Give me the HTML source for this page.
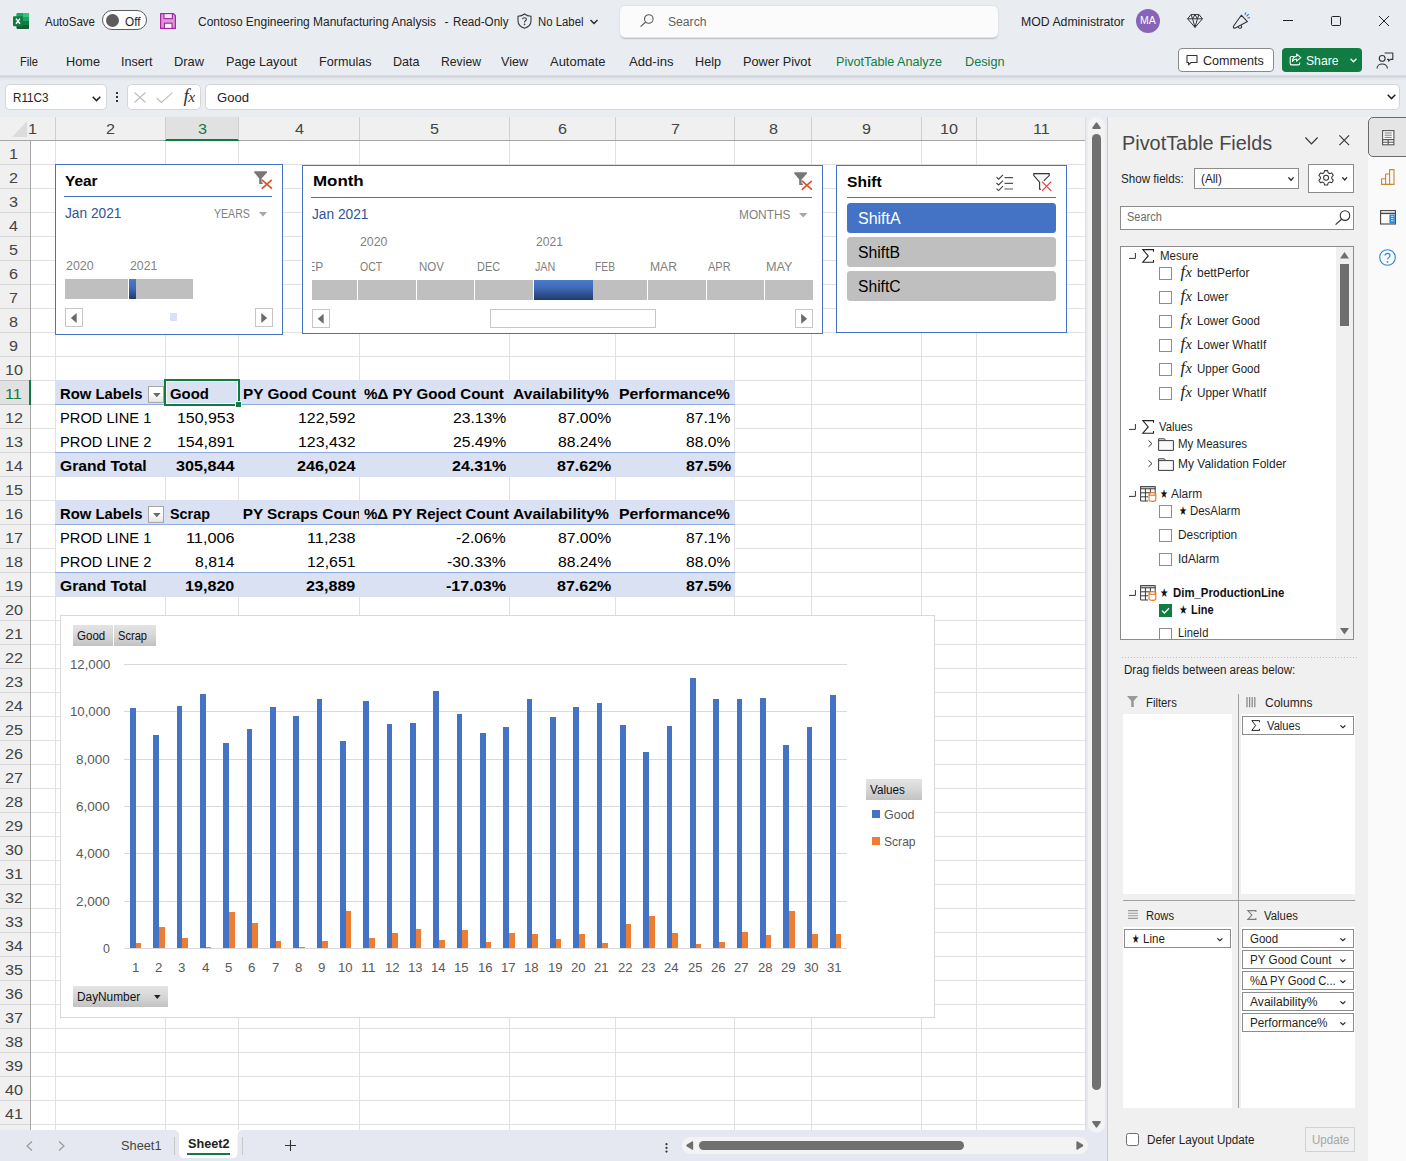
<!DOCTYPE html>
<html lang="en">
<head>
<meta charset="utf-8">
<title>Contoso Engineering Manufacturing Analysis - Excel</title>
<style>
*{box-sizing:border-box;margin:0;padding:0}
html,body{width:1406px;height:1161px;overflow:hidden;background:#fff}
body{position:relative;font-family:"Liberation Sans",Arial,sans-serif;}
.grp{position:absolute;left:0;top:0;width:0;height:0}
.grp div,.grp svg,.grp span.t,.grp b.t,.grp i.t,.grp label.t,.grp button.t{position:absolute}
.t{white-space:pre;line-height:1;transform-origin:0 0;display:block;font-weight:400;font-style:normal;background:none;border:0}
svg{overflow:visible;display:block}
</style>
</head>
<body>
<header class="grp titlebar" aria-label="titlebar">
<div style="left:0px;top:0px;width:1406px;height:76px;background:#e9edf2;"></div>
<svg style="left:13px;top:13px;" width="16" height="16" viewBox="0 0 16 16"><rect x="3.6" y="0" width="12.4" height="16" rx="1.3" fill="#21a366"/><rect x="9.8" y="0" width="6.2" height="4" fill="#33c481"/><path d="M4.9 0 H9.8 V4 H3.6 V1.3 C3.6 0.5 4.1 0 4.9 0 Z" fill="#21a366"/><rect x="3.6" y="4" width="6.2" height="4" fill="#107c41"/><rect x="9.8" y="4" width="6.2" height="4" fill="#21a366"/><rect x="3.6" y="8" width="6.2" height="4" fill="#185c37"/><rect x="9.8" y="8" width="6.2" height="4" fill="#107c41"/><path d="M3.6 12 H16 V14.7 C16 15.5 15.5 16 14.7 16 H4.9 C4.1 16 3.6 15.5 3.6 14.7 Z" fill="#185c37"/><rect x="0" y="3.2" width="10" height="10" rx="1" fill="#107c41"/><path d="M3 5.6 L7 10.8 M7 5.6 L3 10.8" stroke="#fff" stroke-width="1.5" fill="none"/></svg>
<span class="t" style="top:16.00px;font-size:12px;color:#242424;left:45.00px;transform:scaleX(0.9607);">AutoSave</span>
<div style="left:101.5px;top:10px;width:45px;height:20px;background:#fdfdfd;border:1px solid #5c5c5c;border-radius:10px;"></div>
<div style="left:105.5px;top:13.5px;width:13px;height:13px;background:#5c5c5c;border-radius:6.5px;"></div>
<span class="t" style="top:16.00px;font-size:12px;color:#242424;left:124.50px;transform:scaleX(0.9812);">Off</span>
<svg style="left:160px;top:13px;" width="16" height="16" viewBox="0 0 16 16"><path d="M0.6 0.6 H13.4 L15.4 2.6 V15.4 H0.6 Z" fill="#d99ad8" stroke="#a4269f" stroke-width="1.2" stroke-linejoin="round"/><rect x="4" y="0.6" width="8.4" height="5" fill="#f7e9f7" stroke="#a4269f" stroke-width="1.1"/><rect x="4.4" y="10.2" width="7.6" height="5.2" fill="#fdf6fd" stroke="#a4269f" stroke-width="1.1"/></svg>
<span class="t" style="top:16.00px;font-size:12px;color:#242424;left:197.50px;transform:scaleX(0.9966);">Contoso Engineering Manufacturing Analysis</span>
<span class="t" style="top:16.00px;font-size:12px;color:#242424;left:444.50px;">-</span>
<span class="t" style="top:16.00px;font-size:12px;color:#242424;left:453.00px;transform:scaleX(0.9676);">Read-Only</span>
<svg style="left:517px;top:13px;" width="15" height="16" viewBox="0 0 15 16"><path d="M7.5 1 C9.5 2.6 11.8 3.2 14 3.3 V8 C14 11.5 11.2 14 7.5 15.3 C3.8 14 1 11.5 1 8 V3.3 C3.2 3.2 5.5 2.6 7.5 1 Z" fill="none" stroke="#3b3b3b" stroke-width="1.1"/><path d="M5.6 6.2 C5.6 4.2 9.4 4.2 9.4 6.3 C9.4 7.8 7.5 7.8 7.5 9.4" fill="none" stroke="#3b3b3b" stroke-width="1.1"/><circle cx="7.5" cy="11.4" r="0.8" fill="#3b3b3b"/></svg>
<span class="t" style="top:16.00px;font-size:12px;color:#242424;left:537.50px;transform:scaleX(0.9470);">No Label</span>
<svg style="left:589.5px;top:18.8px;" width="8" height="6" viewBox="0 0 8 6"><path d="M0.5 1 L4 4.5 L7.5 1" fill="none" stroke="#242424" stroke-width="1.4"/></svg>
<div style="left:619.5px;top:6px;width:378.5px;height:31px;background:#fbfbfb;border-radius:5px;box-shadow:0 0 0 1px #dfe2e7, 0 1.5px 1.5px #b9bcc2;"></div>
<svg style="left:639.5px;top:14px;" width="14" height="13" viewBox="0 0 14 13"><circle cx="8.8" cy="5" r="4.3" fill="none" stroke="#5a5a5a" stroke-width="1.1"/><path d="M5.7 8 L0.6 12.6" stroke="#5a5a5a" stroke-width="1.2"/></svg>
<span class="t" style="top:16.00px;font-size:12px;color:#616161;left:668.00px;transform:scaleX(1.0123);">Search</span>
<span class="t" style="top:16.00px;font-size:12px;color:#242424;left:1021.30px;transform:scaleX(1.0231);">MOD Administrator</span>
<div style="left:1136px;top:9px;width:24px;height:24px;background:#8764b8;border-radius:12px;"></div>
<span class="t" style="top:15.00px;font-size:10.5px;color:#fff;left:1140.12px;">MA</span>
<svg style="left:1187px;top:13.5px;" width="16" height="14" viewBox="0 0 16 14"><path d="M4 0.6 H12 L15.4 4.8 L8 13.4 L0.6 4.8 Z M0.6 4.8 H15.4 M4 0.6 L5.6 4.8 L8 13.4 L10.4 4.8 L12 0.6 M8 0.6 L5.6 4.8 M8 0.6 L10.4 4.8" fill="none" stroke="#333" stroke-width="1" stroke-linejoin="round"/></svg>
<svg style="left:1232px;top:12px;" width="18" height="18" viewBox="0 0 18 18"><path d="M9.3 3.2 L15.4 9.6 L3.4 16 C2 16.6 0.8 15.4 1.6 14 Z" fill="none" stroke="#333" stroke-width="1.1" stroke-linejoin="round"/><path d="M6.2 14.8 C6.6 16.6 8.8 16.8 9.6 15.2 L9.4 13.2" fill="none" stroke="#333" stroke-width="1.1"/><path d="M13 2.6 L13.8 0.8 M14.8 4 L16.4 2.4 M15.8 6 L17.6 5.6" stroke="#2b7cd3" stroke-width="1.1" stroke-linecap="round"/></svg>
<svg style="left:1283px;top:20px;" width="10" height="1" viewBox="0 0 10 1"><rect width="10" height="1" fill="#222"/></svg>
<svg style="left:1331px;top:16px;" width="10" height="10" viewBox="0 0 10 10"><rect x="0.5" y="0.5" width="9" height="9" rx="1" fill="none" stroke="#222" stroke-width="1"/></svg>
<svg style="left:1379px;top:16px;" width="10" height="10" viewBox="0 0 10 10"><path d="M0 0 L10 10 M10 0 L0 10" stroke="#222" stroke-width="1"/></svg>
</header>
<nav class="grp ribbon" aria-label="ribbon">
<span class="t" style="top:55.00px;font-size:13px;color:#242424;left:19.50px;transform:scaleX(0.8591);">File</span>
<span class="t" style="top:55.00px;font-size:13px;color:#242424;left:65.50px;transform:scaleX(0.9802);">Home</span>
<span class="t" style="top:55.00px;font-size:13px;color:#242424;left:121.00px;transform:scaleX(0.9688);">Insert</span>
<span class="t" style="top:55.00px;font-size:13px;color:#242424;left:174.00px;transform:scaleX(0.9887);">Draw</span>
<span class="t" style="top:55.00px;font-size:13px;color:#242424;left:226.00px;transform:scaleX(0.9724);">Page Layout</span>
<span class="t" style="top:55.00px;font-size:13px;color:#242424;left:319.00px;transform:scaleX(0.9689);">Formulas</span>
<span class="t" style="top:55.00px;font-size:13px;color:#242424;left:393.00px;transform:scaleX(0.9647);">Data</span>
<span class="t" style="top:55.00px;font-size:13px;color:#242424;left:441.00px;transform:scaleX(0.9384);">Review</span>
<span class="t" style="top:55.00px;font-size:13px;color:#242424;left:500.80px;transform:scaleX(0.9659);">View</span>
<span class="t" style="top:55.00px;font-size:13px;color:#242424;left:549.50px;transform:scaleX(0.9972);">Automate</span>
<span class="t" style="top:55.00px;font-size:13px;color:#242424;left:628.50px;transform:scaleX(1.0096);">Add-ins</span>
<span class="t" style="top:55.00px;font-size:13px;color:#242424;left:694.50px;transform:scaleX(0.9720);">Help</span>
<span class="t" style="top:55.00px;font-size:13px;color:#242424;left:743.00px;transform:scaleX(0.9802);">Power Pivot</span>
<span class="t" style="top:55.00px;font-size:13px;color:#107c41;left:836.00px;transform:scaleX(0.9714);">PivotTable Analyze</span>
<span class="t" style="top:55.00px;font-size:13px;color:#107c41;left:965.00px;transform:scaleX(0.9761);">Design</span>
<div style="left:1178px;top:48px;width:95.5px;height:24px;background:#fff;border:1px solid #8a8a8a;border-radius:4px;"></div>
<svg style="left:1186px;top:54px;" width="12" height="12" viewBox="0 0 12 12"><path d="M1 1.5 H11 V8.5 H5 L2.6 10.8 V8.5 H1 Z" fill="none" stroke="#333" stroke-width="1.1" stroke-linejoin="round"/></svg>
<span class="t" style="top:54.00px;font-size:13px;color:#242424;left:1202.70px;transform:scaleX(0.9672);">Comments</span>
<div style="left:1282px;top:48px;width:80px;height:24px;background:#107c41;border-radius:4px;"></div>
<svg style="left:1289px;top:53px;" width="13" height="13" viewBox="0 0 13 13"><path d="M5 3.5 H2.5 C1.7 3.5 1.2 4 1.2 4.8 V10.6 C1.2 11.4 1.7 11.9 2.5 11.9 H9.4 C10.2 11.9 10.7 11.4 10.7 10.6 V9.4" fill="none" stroke="#fff" stroke-width="1.1"/><path d="M7.6 1 L11.8 4.6 L7.6 8.2 V6 C5.4 6 4.2 6.8 3.4 8.4 C3.6 5.4 5 3.4 7.6 3.2 Z" fill="none" stroke="#fff" stroke-width="1.1" stroke-linejoin="round"/></svg>
<span class="t" style="top:54.00px;font-size:13px;color:#fff;left:1306.00px;transform:scaleX(0.9365);">Share</span>
<svg style="left:1350px;top:58px;" width="7" height="5" viewBox="0 0 7 5"><path d="M0.5 0.8 L3.5 3.8 L6.5 0.8" fill="none" stroke="#fff" stroke-width="1.3"/></svg>
<svg style="left:1376px;top:52px;" width="18" height="17" viewBox="0 0 18 17"><circle cx="6.2" cy="6.4" r="2.9" fill="none" stroke="#333" stroke-width="1.1"/><path d="M1 16.5 C1 10.4 11.4 10.4 11.4 16.5" fill="none" stroke="#333" stroke-width="1.1"/><path d="M8.6 1 H16.8 V7.4 H14.4 L12.6 9.2 V7.4 H11" fill="none" stroke="#333" stroke-width="1.1" stroke-linejoin="round"/></svg>
</nav>
<section class="grp formulabar" aria-label="formulabar">
<div style="left:0px;top:75px;width:1406px;height:42px;background:linear-gradient(#e4e7ec 0,#cbcfd5 1px,#d6d9df 2px,#e2e5ea 3.5px,#e9edf2 6px);"></div>
<div style="left:5px;top:84px;width:102px;height:26px;background:#fff;border:1px solid #d3d5d9;border-radius:4.5px;"></div>
<span class="t" style="top:91.00px;font-size:13px;color:#242424;left:12.50px;transform:scaleX(0.8984);">R11C3</span>
<svg style="left:92px;top:95.5px;" width="9" height="6" viewBox="0 0 9 6"><path d="M0.7 0.8 L4.5 4.6 L8.3 0.8" fill="none" stroke="#222" stroke-width="1.5"/></svg>
<svg style="left:116px;top:92px;shape-rendering:crispEdges;" width="2" height="10" viewBox="0 0 2 10"><rect x="0" y="0" width="2" height="2" fill="#333"/><rect x="0" y="4" width="2" height="2" fill="#333"/><rect x="0" y="8" width="2" height="2" fill="#333"/></svg>
<div style="left:127px;top:84px;width:74px;height:26px;background:#fff;border:1px solid #d3d5d9;border-radius:4.5px;"></div>
<svg style="left:134px;top:91.5px;" width="12" height="11" viewBox="0 0 12 11"><path d="M0.5 0.5 L11.5 10.5 M11.5 0.5 L0.5 10.5" stroke="#bdbdbd" stroke-width="1.1"/></svg>
<svg style="left:155.5px;top:91.5px;" width="17" height="11" viewBox="0 0 17 11"><path d="M0.6 6 L5.4 10.4 L16.4 0.6" fill="none" stroke="#bdbdbd" stroke-width="1.1"/></svg>
<span class="t" style="top:86.00px;font-size:19px;color:#333;font-family:'Liberation Serif', 'Times New Roman', serif;font-style:italic;left:183.40px;">f</span>
<span class="t" style="top:89.00px;font-size:15.5px;color:#333;font-family:'Liberation Serif', 'Times New Roman', serif;font-style:italic;left:188.20px;">x</span>
<div style="left:205px;top:84px;width:1195px;height:26px;background:#fff;border:1px solid #d3d5d9;border-radius:4.5px;"></div>
<span class="t" style="top:91.00px;font-size:13px;color:#242424;left:217.00px;transform:scaleX(1.0059);">Good</span>
<svg style="left:1387px;top:93.5px;" width="9" height="6" viewBox="0 0 9 6"><path d="M0.7 0.8 L4.5 4.6 L8.3 0.8" fill="none" stroke="#222" stroke-width="1.5"/></svg>
</section>
<main class="grp grid" aria-label="grid">
<div style="left:0px;top:117px;width:1107px;height:1013px;background:#fff;"></div>
<div style="left:0px;top:117px;width:1085px;height:23px;background:#f0f0f0;"></div>
<div style="left:0px;top:140px;width:1085px;height:1px;background:#a6a6a6;"></div>
<div style="left:0px;top:141px;width:30px;height:989px;background:#f0f0f0;"></div>
<div style="left:30px;top:141px;width:1px;height:989px;background:#a6a6a6;"></div>
<svg style="left:12px;top:121px;" width="15" height="16" viewBox="0 0 15 16"><path d="M15 0 V16 H0 Z" fill="#dcdcdc"/></svg>
<div style="left:166px;top:117px;width:72px;height:22px;background:#e1e1e1;"></div>
<div style="left:165px;top:139px;width:74px;height:2px;background:#107c41;"></div>
<div style="left:0px;top:381px;width:29px;height:23px;background:#e1e1e1;"></div>
<div style="left:55px;top:117px;width:1px;height:23px;background:#cfcfcf;"></div>
<div style="left:55px;top:141px;width:1px;height:989px;background:#e1e1e1;"></div>
<div style="left:165px;top:117px;width:1px;height:23px;background:#cfcfcf;"></div>
<div style="left:165px;top:141px;width:1px;height:989px;background:#e1e1e1;"></div>
<div style="left:238px;top:117px;width:1px;height:23px;background:#cfcfcf;"></div>
<div style="left:238px;top:141px;width:1px;height:989px;background:#e1e1e1;"></div>
<div style="left:359px;top:117px;width:1px;height:23px;background:#cfcfcf;"></div>
<div style="left:359px;top:141px;width:1px;height:989px;background:#e1e1e1;"></div>
<div style="left:509px;top:117px;width:1px;height:23px;background:#cfcfcf;"></div>
<div style="left:509px;top:141px;width:1px;height:989px;background:#e1e1e1;"></div>
<div style="left:615px;top:117px;width:1px;height:23px;background:#cfcfcf;"></div>
<div style="left:615px;top:141px;width:1px;height:989px;background:#e1e1e1;"></div>
<div style="left:734px;top:117px;width:1px;height:23px;background:#cfcfcf;"></div>
<div style="left:734px;top:141px;width:1px;height:989px;background:#e1e1e1;"></div>
<div style="left:811px;top:117px;width:1px;height:23px;background:#cfcfcf;"></div>
<div style="left:811px;top:141px;width:1px;height:989px;background:#e1e1e1;"></div>
<div style="left:921px;top:117px;width:1px;height:23px;background:#cfcfcf;"></div>
<div style="left:921px;top:141px;width:1px;height:989px;background:#e1e1e1;"></div>
<div style="left:976px;top:117px;width:1px;height:23px;background:#cfcfcf;"></div>
<div style="left:976px;top:141px;width:1px;height:989px;background:#e1e1e1;"></div>
<div style="left:0px;top:164px;width:30px;height:1px;background:#d6d6d6;"></div>
<div style="left:31px;top:164px;width:1054px;height:1px;background:#e1e1e1;"></div>
<div style="left:0px;top:188px;width:30px;height:1px;background:#d6d6d6;"></div>
<div style="left:31px;top:188px;width:1054px;height:1px;background:#e1e1e1;"></div>
<div style="left:0px;top:212px;width:30px;height:1px;background:#d6d6d6;"></div>
<div style="left:31px;top:212px;width:1054px;height:1px;background:#e1e1e1;"></div>
<div style="left:0px;top:236px;width:30px;height:1px;background:#d6d6d6;"></div>
<div style="left:31px;top:236px;width:1054px;height:1px;background:#e1e1e1;"></div>
<div style="left:0px;top:260px;width:30px;height:1px;background:#d6d6d6;"></div>
<div style="left:31px;top:260px;width:1054px;height:1px;background:#e1e1e1;"></div>
<div style="left:0px;top:284px;width:30px;height:1px;background:#d6d6d6;"></div>
<div style="left:31px;top:284px;width:1054px;height:1px;background:#e1e1e1;"></div>
<div style="left:0px;top:308px;width:30px;height:1px;background:#d6d6d6;"></div>
<div style="left:31px;top:308px;width:1054px;height:1px;background:#e1e1e1;"></div>
<div style="left:0px;top:332px;width:30px;height:1px;background:#d6d6d6;"></div>
<div style="left:31px;top:332px;width:1054px;height:1px;background:#e1e1e1;"></div>
<div style="left:0px;top:356px;width:30px;height:1px;background:#d6d6d6;"></div>
<div style="left:31px;top:356px;width:1054px;height:1px;background:#e1e1e1;"></div>
<div style="left:0px;top:380px;width:30px;height:1px;background:#c4c4c4;"></div>
<div style="left:31px;top:380px;width:1054px;height:1px;background:#e1e1e1;"></div>
<div style="left:0px;top:404px;width:30px;height:1px;background:#c4c4c4;"></div>
<div style="left:31px;top:404px;width:1054px;height:1px;background:#e1e1e1;"></div>
<div style="left:0px;top:428px;width:30px;height:1px;background:#d6d6d6;"></div>
<div style="left:31px;top:428px;width:1054px;height:1px;background:#e1e1e1;"></div>
<div style="left:0px;top:452px;width:30px;height:1px;background:#d6d6d6;"></div>
<div style="left:31px;top:452px;width:1054px;height:1px;background:#e1e1e1;"></div>
<div style="left:0px;top:476px;width:30px;height:1px;background:#d6d6d6;"></div>
<div style="left:31px;top:476px;width:1054px;height:1px;background:#e1e1e1;"></div>
<div style="left:0px;top:500px;width:30px;height:1px;background:#d6d6d6;"></div>
<div style="left:31px;top:500px;width:1054px;height:1px;background:#e1e1e1;"></div>
<div style="left:0px;top:524px;width:30px;height:1px;background:#d6d6d6;"></div>
<div style="left:31px;top:524px;width:1054px;height:1px;background:#e1e1e1;"></div>
<div style="left:0px;top:548px;width:30px;height:1px;background:#d6d6d6;"></div>
<div style="left:31px;top:548px;width:1054px;height:1px;background:#e1e1e1;"></div>
<div style="left:0px;top:572px;width:30px;height:1px;background:#d6d6d6;"></div>
<div style="left:31px;top:572px;width:1054px;height:1px;background:#e1e1e1;"></div>
<div style="left:0px;top:596px;width:30px;height:1px;background:#d6d6d6;"></div>
<div style="left:31px;top:596px;width:1054px;height:1px;background:#e1e1e1;"></div>
<div style="left:0px;top:620px;width:30px;height:1px;background:#d6d6d6;"></div>
<div style="left:31px;top:620px;width:1054px;height:1px;background:#e1e1e1;"></div>
<div style="left:0px;top:644px;width:30px;height:1px;background:#d6d6d6;"></div>
<div style="left:31px;top:644px;width:1054px;height:1px;background:#e1e1e1;"></div>
<div style="left:0px;top:668px;width:30px;height:1px;background:#d6d6d6;"></div>
<div style="left:31px;top:668px;width:1054px;height:1px;background:#e1e1e1;"></div>
<div style="left:0px;top:692px;width:30px;height:1px;background:#d6d6d6;"></div>
<div style="left:31px;top:692px;width:1054px;height:1px;background:#e1e1e1;"></div>
<div style="left:0px;top:716px;width:30px;height:1px;background:#d6d6d6;"></div>
<div style="left:31px;top:716px;width:1054px;height:1px;background:#e1e1e1;"></div>
<div style="left:0px;top:740px;width:30px;height:1px;background:#d6d6d6;"></div>
<div style="left:31px;top:740px;width:1054px;height:1px;background:#e1e1e1;"></div>
<div style="left:0px;top:764px;width:30px;height:1px;background:#d6d6d6;"></div>
<div style="left:31px;top:764px;width:1054px;height:1px;background:#e1e1e1;"></div>
<div style="left:0px;top:788px;width:30px;height:1px;background:#d6d6d6;"></div>
<div style="left:31px;top:788px;width:1054px;height:1px;background:#e1e1e1;"></div>
<div style="left:0px;top:812px;width:30px;height:1px;background:#d6d6d6;"></div>
<div style="left:31px;top:812px;width:1054px;height:1px;background:#e1e1e1;"></div>
<div style="left:0px;top:836px;width:30px;height:1px;background:#d6d6d6;"></div>
<div style="left:31px;top:836px;width:1054px;height:1px;background:#e1e1e1;"></div>
<div style="left:0px;top:860px;width:30px;height:1px;background:#d6d6d6;"></div>
<div style="left:31px;top:860px;width:1054px;height:1px;background:#e1e1e1;"></div>
<div style="left:0px;top:884px;width:30px;height:1px;background:#d6d6d6;"></div>
<div style="left:31px;top:884px;width:1054px;height:1px;background:#e1e1e1;"></div>
<div style="left:0px;top:908px;width:30px;height:1px;background:#d6d6d6;"></div>
<div style="left:31px;top:908px;width:1054px;height:1px;background:#e1e1e1;"></div>
<div style="left:0px;top:932px;width:30px;height:1px;background:#d6d6d6;"></div>
<div style="left:31px;top:932px;width:1054px;height:1px;background:#e1e1e1;"></div>
<div style="left:0px;top:956px;width:30px;height:1px;background:#d6d6d6;"></div>
<div style="left:31px;top:956px;width:1054px;height:1px;background:#e1e1e1;"></div>
<div style="left:0px;top:980px;width:30px;height:1px;background:#d6d6d6;"></div>
<div style="left:31px;top:980px;width:1054px;height:1px;background:#e1e1e1;"></div>
<div style="left:0px;top:1004px;width:30px;height:1px;background:#d6d6d6;"></div>
<div style="left:31px;top:1004px;width:1054px;height:1px;background:#e1e1e1;"></div>
<div style="left:0px;top:1028px;width:30px;height:1px;background:#d6d6d6;"></div>
<div style="left:31px;top:1028px;width:1054px;height:1px;background:#e1e1e1;"></div>
<div style="left:0px;top:1052px;width:30px;height:1px;background:#d6d6d6;"></div>
<div style="left:31px;top:1052px;width:1054px;height:1px;background:#e1e1e1;"></div>
<div style="left:0px;top:1076px;width:30px;height:1px;background:#d6d6d6;"></div>
<div style="left:31px;top:1076px;width:1054px;height:1px;background:#e1e1e1;"></div>
<div style="left:0px;top:1100px;width:30px;height:1px;background:#d6d6d6;"></div>
<div style="left:31px;top:1100px;width:1054px;height:1px;background:#e1e1e1;"></div>
<div style="left:0px;top:1124px;width:30px;height:1px;background:#d6d6d6;"></div>
<div style="left:31px;top:1124px;width:1054px;height:1px;background:#e1e1e1;"></div>
<div style="left:29px;top:380px;width:2px;height:25px;background:#107c41;"></div>
<span class="t" style="top:121.00px;font-size:15.4px;color:#444;left:27.70px;transform:scaleX(1.0500);">1</span>
<span class="t" style="top:121.00px;font-size:15.4px;color:#444;left:106.00px;transform:scaleX(1.0500);">2</span>
<span class="t" style="top:121.00px;font-size:15.4px;color:#107c41;left:197.50px;transform:scaleX(1.0500);">3</span>
<span class="t" style="top:121.00px;font-size:15.4px;color:#444;left:294.50px;transform:scaleX(1.0500);">4</span>
<span class="t" style="top:121.00px;font-size:15.4px;color:#444;left:430.00px;transform:scaleX(1.0500);">5</span>
<span class="t" style="top:121.00px;font-size:15.4px;color:#444;left:558.00px;transform:scaleX(1.0500);">6</span>
<span class="t" style="top:121.00px;font-size:15.4px;color:#444;left:670.50px;transform:scaleX(1.0500);">7</span>
<span class="t" style="top:121.00px;font-size:15.4px;color:#444;left:768.50px;transform:scaleX(1.0500);">8</span>
<span class="t" style="top:121.00px;font-size:15.4px;color:#444;left:862.00px;transform:scaleX(1.0500);">9</span>
<span class="t" style="top:121.00px;font-size:15.4px;color:#444;left:940.01px;transform:scaleX(1.0500);">10</span>
<span class="t" style="top:121.00px;font-size:15.4px;color:#444;left:1032.81px;transform:scaleX(1.0500);">11</span>
<span class="t" style="top:146.00px;font-size:15.4px;color:#444;left:9.30px;transform:scaleX(1.0500);">1</span>
<span class="t" style="top:170.00px;font-size:15.4px;color:#444;left:9.30px;transform:scaleX(1.0500);">2</span>
<span class="t" style="top:194.00px;font-size:15.4px;color:#444;left:9.30px;transform:scaleX(1.0500);">3</span>
<span class="t" style="top:218.00px;font-size:15.4px;color:#444;left:9.30px;transform:scaleX(1.0500);">4</span>
<span class="t" style="top:242.00px;font-size:15.4px;color:#444;left:9.30px;transform:scaleX(1.0500);">5</span>
<span class="t" style="top:266.00px;font-size:15.4px;color:#444;left:9.30px;transform:scaleX(1.0500);">6</span>
<span class="t" style="top:290.00px;font-size:15.4px;color:#444;left:9.30px;transform:scaleX(1.0500);">7</span>
<span class="t" style="top:314.00px;font-size:15.4px;color:#444;left:9.30px;transform:scaleX(1.0500);">8</span>
<span class="t" style="top:338.00px;font-size:15.4px;color:#444;left:9.30px;transform:scaleX(1.0500);">9</span>
<span class="t" style="top:362.00px;font-size:15.4px;color:#444;left:4.81px;transform:scaleX(1.0500);">10</span>
<span class="t" style="top:386.00px;font-size:15.4px;color:#107c41;left:5.41px;transform:scaleX(1.0500);">11</span>
<span class="t" style="top:410.00px;font-size:15.4px;color:#444;left:4.81px;transform:scaleX(1.0500);">12</span>
<span class="t" style="top:434.00px;font-size:15.4px;color:#444;left:4.81px;transform:scaleX(1.0500);">13</span>
<span class="t" style="top:458.00px;font-size:15.4px;color:#444;left:4.81px;transform:scaleX(1.0500);">14</span>
<span class="t" style="top:482.00px;font-size:15.4px;color:#444;left:4.81px;transform:scaleX(1.0500);">15</span>
<span class="t" style="top:506.00px;font-size:15.4px;color:#444;left:4.81px;transform:scaleX(1.0500);">16</span>
<span class="t" style="top:530.00px;font-size:15.4px;color:#444;left:4.81px;transform:scaleX(1.0500);">17</span>
<span class="t" style="top:554.00px;font-size:15.4px;color:#444;left:4.81px;transform:scaleX(1.0500);">18</span>
<span class="t" style="top:578.00px;font-size:15.4px;color:#444;left:4.81px;transform:scaleX(1.0500);">19</span>
<span class="t" style="top:602.00px;font-size:15.4px;color:#444;left:4.81px;transform:scaleX(1.0500);">20</span>
<span class="t" style="top:626.00px;font-size:15.4px;color:#444;left:4.81px;transform:scaleX(1.0500);">21</span>
<span class="t" style="top:650.00px;font-size:15.4px;color:#444;left:4.81px;transform:scaleX(1.0500);">22</span>
<span class="t" style="top:674.00px;font-size:15.4px;color:#444;left:4.81px;transform:scaleX(1.0500);">23</span>
<span class="t" style="top:698.00px;font-size:15.4px;color:#444;left:4.81px;transform:scaleX(1.0500);">24</span>
<span class="t" style="top:722.00px;font-size:15.4px;color:#444;left:4.81px;transform:scaleX(1.0500);">25</span>
<span class="t" style="top:746.00px;font-size:15.4px;color:#444;left:4.81px;transform:scaleX(1.0500);">26</span>
<span class="t" style="top:770.00px;font-size:15.4px;color:#444;left:4.81px;transform:scaleX(1.0500);">27</span>
<span class="t" style="top:794.00px;font-size:15.4px;color:#444;left:4.81px;transform:scaleX(1.0500);">28</span>
<span class="t" style="top:818.00px;font-size:15.4px;color:#444;left:4.81px;transform:scaleX(1.0500);">29</span>
<span class="t" style="top:842.00px;font-size:15.4px;color:#444;left:4.81px;transform:scaleX(1.0500);">30</span>
<span class="t" style="top:866.00px;font-size:15.4px;color:#444;left:4.81px;transform:scaleX(1.0500);">31</span>
<span class="t" style="top:890.00px;font-size:15.4px;color:#444;left:4.81px;transform:scaleX(1.0500);">32</span>
<span class="t" style="top:914.00px;font-size:15.4px;color:#444;left:4.81px;transform:scaleX(1.0500);">33</span>
<span class="t" style="top:938.00px;font-size:15.4px;color:#444;left:4.81px;transform:scaleX(1.0500);">34</span>
<span class="t" style="top:962.00px;font-size:15.4px;color:#444;left:4.81px;transform:scaleX(1.0500);">35</span>
<span class="t" style="top:986.00px;font-size:15.4px;color:#444;left:4.81px;transform:scaleX(1.0500);">36</span>
<span class="t" style="top:1010.00px;font-size:15.4px;color:#444;left:4.81px;transform:scaleX(1.0500);">37</span>
<span class="t" style="top:1034.00px;font-size:15.4px;color:#444;left:4.81px;transform:scaleX(1.0500);">38</span>
<span class="t" style="top:1058.00px;font-size:15.4px;color:#444;left:4.81px;transform:scaleX(1.0500);">39</span>
<span class="t" style="top:1082.00px;font-size:15.4px;color:#444;left:4.81px;transform:scaleX(1.0500);">40</span>
<span class="t" style="top:1106.00px;font-size:15.4px;color:#444;left:4.81px;transform:scaleX(1.0500);">41</span>
</main>
<section class="grp slicer-year" aria-label="slicer-year">
<div style="left:55px;top:164px;width:228px;height:171px;background:#fff;border:1px solid #4472c4;"></div>
<span class="t" style="top:174.00px;font-size:14.5px;color:#000;font-weight:700;left:65.40px;transform:scaleX(1.0634);">Year</span>
<svg style="left:254px;top:171px;" width="19" height="19" viewBox="0 0 19 19"><path d="M0.2 0.3 H13 V1.6 L7.6 7.4 V11.6 H8.8 V12.9 H5.2 V7.4 L0.2 1.6 Z" fill="#787878"/><path d="M8.2 9.2 L17.4 17.2 M17.2 9.4 L8.2 17.3" stroke="#d9532c" stroke-width="1.7" stroke-linecap="round"/></svg>
<div style="left:64px;top:196px;width:208px;height:1px;background:#4472c4;"></div>
<span class="t" style="top:206.00px;font-size:14px;color:#2f5597;left:65.00px;transform:scaleX(0.9790);">Jan 2021</span>
<span class="t" style="top:208.00px;font-size:12px;color:#7f7f7f;left:214.20px;transform:scaleX(0.8799);">YEARS</span>
<svg style="left:259.3px;top:212px;" width="8" height="4.5" viewBox="0 0 8 4.5"><path d="M0 0 H8 L4 4.5 Z" fill="#a6a6a6"/></svg>
<span class="t" style="top:260.00px;font-size:12px;color:#7f7f7f;left:66.40px;transform:scaleX(1.0336);">2020</span>
<span class="t" style="top:260.00px;font-size:12px;color:#7f7f7f;left:130.20px;transform:scaleX(1.0224);">2021</span>
<div style="left:65px;top:279px;width:128px;height:19.5px;background:#bfbfbf;"></div>
<div style="left:127.7px;top:279px;width:1.6px;height:19.5px;background:#fff;"></div>
<div style="left:129.3px;top:279px;width:6.7px;height:19.5px;background:linear-gradient(#4a7acc,#3f69b5 45%,#1f3a6e);"></div>
<div style="left:65px;top:308px;width:18px;height:18.6px;background:#fff;border:1px solid #c6c6c6;"><svg style="left:-1px;top:-1px" width="18" height="18.6"><path d="M11.7 4.9 L5.8 9.9 L11.7 14.9 Z" fill="#6b6b6b"/></svg></div>
<div style="left:255px;top:308px;width:18px;height:18.6px;background:#fff;border:1px solid #c6c6c6;"><svg style="left:-1px;top:-1px" width="18" height="18.6"><path d="M6.3 4.9 L12.2 9.9 L6.3 14.9 Z" fill="#6b6b6b"/></svg></div>
<div style="left:169.8px;top:313px;width:7.2px;height:7.8px;background:#d9e1f2;"></div>
</section>
<section class="grp slicer-month" aria-label="slicer-month">
<div style="left:302px;top:165px;width:521px;height:169px;background:#fff;border:1px solid #4472c4;"></div>
<span class="t" style="top:174.00px;font-size:14.5px;color:#000;font-weight:700;left:312.60px;transform:scaleX(1.1659);">Month</span>
<svg style="left:794px;top:172px;" width="19" height="19" viewBox="0 0 19 19"><path d="M0.2 0.3 H13 V1.6 L7.6 7.4 V11.6 H8.8 V12.9 H5.2 V7.4 L0.2 1.6 Z" fill="#787878"/><path d="M8.2 9.2 L17.4 17.2 M17.2 9.4 L8.2 17.3" stroke="#d9532c" stroke-width="1.7" stroke-linecap="round"/></svg>
<div style="left:311px;top:197.3px;width:501px;height:1px;background:#4472c4;"></div>
<span class="t" style="top:207.00px;font-size:14px;color:#2f5597;left:312.20px;transform:scaleX(0.9807);">Jan 2021</span>
<span class="t" style="top:209.00px;font-size:12px;color:#7f7f7f;left:738.60px;transform:scaleX(0.9885);">MONTHS</span>
<svg style="left:799px;top:213px;" width="8.4" height="4.5" viewBox="0 0 8.4 4.5"><path d="M0 0 H8.4 L4.2 4.5 Z" fill="#a6a6a6"/></svg>
<span class="t" style="top:236.00px;font-size:12px;color:#7f7f7f;left:359.50px;transform:scaleX(1.0298);">2020</span>
<span class="t" style="top:236.00px;font-size:12px;color:#7f7f7f;left:535.80px;transform:scaleX(1.0074);">2021</span>
<div style="left:311.8px;top:255px;width:20px;height:20px;overflow:hidden;"><span class="t" style="left:-12.6px;top:6px;font-size:12px;color:#7f7f7f">SEP</span></div>
<span class="t" style="top:261.00px;font-size:12px;color:#7f7f7f;left:359.50px;transform:scaleX(0.8760);">OCT</span>
<span class="t" style="top:261.00px;font-size:12px;color:#7f7f7f;left:418.60px;transform:scaleX(0.9610);">NOV</span>
<span class="t" style="top:261.00px;font-size:12px;color:#7f7f7f;left:476.60px;transform:scaleX(0.9115);">DEC</span>
<span class="t" style="top:261.00px;font-size:12px;color:#7f7f7f;left:535.00px;transform:scaleX(0.8954);">JAN</span>
<span class="t" style="top:261.00px;font-size:12px;color:#7f7f7f;left:595.30px;transform:scaleX(0.8568);">FEB</span>
<span class="t" style="top:261.00px;font-size:12px;color:#7f7f7f;left:649.50px;transform:scaleX(1.0086);">MAR</span>
<span class="t" style="top:261.00px;font-size:12px;color:#7f7f7f;left:707.90px;transform:scaleX(0.9154);">APR</span>
<span class="t" style="top:261.00px;font-size:12px;color:#7f7f7f;left:766.30px;transform:scaleX(1.0547);">MAY</span>
<div style="left:311.8px;top:280px;width:501.2px;height:19.8px;background:#bfbfbf;"></div>
<div style="left:356.8px;top:280px;width:1.3px;height:19.8px;background:#fff;"></div>
<div style="left:415.9px;top:280px;width:1.3px;height:19.8px;background:#fff;"></div>
<div style="left:473.7px;top:280px;width:1.3px;height:19.8px;background:#fff;"></div>
<div style="left:533px;top:280px;width:1.3px;height:19.8px;background:#fff;"></div>
<div style="left:646.8px;top:280px;width:1.3px;height:19.8px;background:#fff;"></div>
<div style="left:705.8px;top:280px;width:1.3px;height:19.8px;background:#fff;"></div>
<div style="left:764px;top:280px;width:1.3px;height:19.8px;background:#fff;"></div>
<div style="left:534.2px;top:280px;width:58.8px;height:19.8px;background:linear-gradient(#4a7acc,#4069b6 40%,#1f3a6e);"></div>
<div style="left:312.2px;top:309.4px;width:17.8px;height:18.2px;background:#fff;border:1px solid #c6c6c6;"><svg style="left:-1px;top:-1px" width="17.8" height="18.2"><path d="M11.600000000000001 4.699999999999999 L5.7 9.7 L11.600000000000001 14.7 Z" fill="#6b6b6b"/></svg></div>
<div style="left:795.2px;top:309.4px;width:17.8px;height:18.2px;background:#fff;border:1px solid #c6c6c6;"><svg style="left:-1px;top:-1px" width="17.8" height="18.2"><path d="M6.2 4.699999999999999 L12.100000000000001 9.7 L6.2 14.7 Z" fill="#6b6b6b"/></svg></div>
<div style="left:490px;top:309.2px;width:165.6px;height:18.4px;background:#fff;border:1px solid #c6c6c6;"></div>
</section>
<section class="grp slicer-shift" aria-label="slicer-shift">
<div style="left:836px;top:165px;width:231px;height:168px;background:#fff;border:1px solid #4472c4;"></div>
<span class="t" style="top:175.00px;font-size:14.5px;color:#000;font-weight:700;left:847.30px;transform:scaleX(1.0739);">Shift</span>
<svg style="left:995.5px;top:173.6px;" width="18" height="17" viewBox="0 0 18 17"><path d="M0.5 3.2 L2.6 5.2 L7 0.8 M0.5 9 L2.6 11 L7 6.6 M0.5 14.6 L2.6 16.6 L7 12.2" fill="none" stroke="#404040" stroke-width="1.1"/><path d="M8.5 3.6 H17 M8.5 9.4 H17 M8.5 15 H17" stroke="#555" stroke-width="1.2"/></svg>
<svg style="left:1032.5px;top:173px;" width="19" height="18" viewBox="0 0 19 18"><path d="M6.6 16.4 V9.2 L0.8 2.6 V0.6 H16.2 V2.6 L10.8 7.8" fill="#f7f7f7" stroke="#333" stroke-width="1.1" stroke-linejoin="miter"/><path d="M6.6 16.4 H7.8" stroke="#333" stroke-width="1.1"/><path d="M9 8.6 L18.2 17.9 M18.2 8.6 L9 17.9" stroke="#ee3b44" stroke-width="1.25"/></svg>
<div style="left:847px;top:196.8px;width:209px;height:1px;background:#4472c4;"></div>
<div style="left:847px;top:203.2px;width:209px;height:29.8px;background:#4472c4;border-radius:3.5px;"></div>
<span class="t" style="top:211.00px;font-size:16px;color:#fff;left:858.40px;transform:scaleX(0.9980);">ShiftA</span>
<div style="left:847px;top:237.2px;width:209px;height:29.6px;background:#bfbfbf;border-radius:3.5px;"></div>
<span class="t" style="top:245.00px;font-size:16px;color:#000;left:858.40px;transform:scaleX(0.9862);">ShiftB</span>
<div style="left:847px;top:271px;width:209px;height:29.8px;background:#bfbfbf;border-radius:3.5px;"></div>
<span class="t" style="top:279.00px;font-size:16px;color:#000;left:858.40px;transform:scaleX(0.9776);">ShiftC</span>
</section>
<section class="grp pivot-good" aria-label="pivot-good">
<div style="left:55px;top:380px;width:680px;height:24px;background:#d9e1f2;"></div>
<div style="left:55px;top:404px;width:680px;height:1px;background:#8ea9db;"></div>
<div style="left:56px;top:405px;width:678px;height:47px;background:#fff;"></div>
<div style="left:55px;top:453px;width:680px;height:24px;background:#d9e1f2;"></div>
<div style="left:55px;top:452px;width:680px;height:1px;background:#8ea9db;"></div>
<span class="t" style="top:386.00px;font-size:15.3px;color:#000;font-weight:700;left:59.70px;transform:scaleX(0.9706);">Row Labels</span>
<div style="left:148px;top:386px;width:16px;height:17px;background:linear-gradient(#fff 40%,#e4e4e4);border:1px solid #a6a6a6;"><svg style="left:3.6px;top:6px" width="8" height="5"><path d="M0 0 H7.6 L3.8 4.3 Z" fill="#6a6a6a"/></svg></div>
<span class="t" style="top:386.00px;font-size:15.3px;color:#000;font-weight:700;left:169.70px;transform:scaleX(0.9740);">Good</span>
<span class="t" style="top:386.00px;font-size:15.3px;color:#000;font-weight:700;left:242.70px;transform:scaleX(1.0024);">PY Good Count</span>
<span class="t" style="top:386.00px;font-size:15.3px;color:#000;font-weight:700;left:363.70px;transform:scaleX(0.9880);">%Δ PY Good Count</span>
<span class="t" style="top:386.00px;font-size:15.3px;color:#000;font-weight:700;left:513.00px;transform:scaleX(1.0223);">Availability%</span>
<span class="t" style="top:386.00px;font-size:15.3px;color:#000;font-weight:700;left:619.10px;transform:scaleX(1.0352);">Performance%</span>
<span class="t" style="top:410.00px;font-size:15.2px;color:#000;left:59.50px;transform:scaleX(0.9658);">PROD LINE 1</span>
<span class="t" style="top:410.00px;font-size:15.2px;color:#000;left:177.42px;transform:scaleX(1.0487);">150,953</span>
<span class="t" style="top:410.00px;font-size:15.2px;color:#000;left:298.42px;transform:scaleX(1.0487);">122,592</span>
<span class="t" style="top:410.00px;font-size:15.2px;color:#000;left:452.63px;transform:scaleX(1.0360);">23.13%</span>
<span class="t" style="top:410.00px;font-size:15.2px;color:#000;left:557.93px;transform:scaleX(1.0360);">87.00%</span>
<span class="t" style="top:410.00px;font-size:15.2px;color:#000;left:686.36px;transform:scaleX(1.0293);">87.1%</span>
<span class="t" style="top:434.00px;font-size:15.2px;color:#000;left:59.50px;transform:scaleX(0.9658);">PROD LINE 2</span>
<span class="t" style="top:434.00px;font-size:15.2px;color:#000;left:177.42px;transform:scaleX(1.0487);">154,891</span>
<span class="t" style="top:434.00px;font-size:15.2px;color:#000;left:298.42px;transform:scaleX(1.0487);">123,432</span>
<span class="t" style="top:434.00px;font-size:15.2px;color:#000;left:452.63px;transform:scaleX(1.0360);">25.49%</span>
<span class="t" style="top:434.00px;font-size:15.2px;color:#000;left:557.93px;transform:scaleX(1.0360);">88.24%</span>
<span class="t" style="top:434.00px;font-size:15.2px;color:#000;left:686.36px;transform:scaleX(1.0293);">88.0%</span>
<span class="t" style="top:458.00px;font-size:15.3px;color:#000;font-weight:700;left:59.50px;transform:scaleX(1.0236);">Grand Total</span>
<span class="t" style="top:458.00px;font-size:15.3px;color:#000;font-weight:700;left:176.18px;transform:scaleX(1.0583);">305,844</span>
<span class="t" style="top:458.00px;font-size:15.3px;color:#000;font-weight:700;left:297.18px;transform:scaleX(1.0583);">246,024</span>
<span class="t" style="top:458.00px;font-size:15.3px;color:#000;font-weight:700;left:452.02px;transform:scaleX(1.0480);">24.31%</span>
<span class="t" style="top:458.00px;font-size:15.3px;color:#000;font-weight:700;left:557.32px;transform:scaleX(1.0480);">87.62%</span>
<span class="t" style="top:458.00px;font-size:15.3px;color:#000;font-weight:700;left:685.89px;transform:scaleX(1.0423);">87.5%</span>
</section>
<section class="grp pivot-scrap" aria-label="pivot-scrap">
<div style="left:55px;top:500px;width:680px;height:24px;background:#d9e1f2;"></div>
<div style="left:55px;top:524px;width:680px;height:1px;background:#8ea9db;"></div>
<div style="left:56px;top:525px;width:678px;height:47px;background:#fff;"></div>
<div style="left:55px;top:573px;width:680px;height:24px;background:#d9e1f2;"></div>
<div style="left:55px;top:572px;width:680px;height:1px;background:#8ea9db;"></div>
<span class="t" style="top:506.00px;font-size:15.3px;color:#000;font-weight:700;left:59.70px;transform:scaleX(0.9706);">Row Labels</span>
<div style="left:148px;top:506px;width:16px;height:17px;background:linear-gradient(#fff 40%,#e4e4e4);border:1px solid #a6a6a6;"><svg style="left:3.6px;top:6px" width="8" height="5"><path d="M0 0 H7.6 L3.8 4.3 Z" fill="#6a6a6a"/></svg></div>
<span class="t" style="top:506.00px;font-size:15.3px;color:#000;font-weight:700;left:169.70px;transform:scaleX(0.9408);">Scrap</span>
<div style="left:242.7px;top:503px;width:116.3px;height:20px;overflow:hidden;"><span class="t" style="left:0;top:2.80px;font-size:15.3px;font-weight:700;color:#000;transform:scaleX(1.0000)">PY Scraps Count</span></div>
<span class="t" style="top:506.00px;font-size:15.3px;color:#000;font-weight:700;left:363.70px;transform:scaleX(0.9826);">%Δ PY Reject Count</span>
<span class="t" style="top:506.00px;font-size:15.3px;color:#000;font-weight:700;left:513.00px;transform:scaleX(1.0223);">Availability%</span>
<span class="t" style="top:506.00px;font-size:15.3px;color:#000;font-weight:700;left:619.10px;transform:scaleX(1.0352);">Performance%</span>
<span class="t" style="top:530.00px;font-size:15.2px;color:#000;left:59.50px;transform:scaleX(0.9658);">PROD LINE 1</span>
<span class="t" style="top:530.00px;font-size:15.2px;color:#000;left:186.45px;transform:scaleX(1.0711);">11,006</span>
<span class="t" style="top:530.00px;font-size:15.2px;color:#000;left:307.45px;transform:scaleX(1.0711);">11,238</span>
<span class="t" style="top:530.00px;font-size:15.2px;color:#000;left:456.26px;transform:scaleX(1.0336);">-2.06%</span>
<span class="t" style="top:530.00px;font-size:15.2px;color:#000;left:557.93px;transform:scaleX(1.0360);">87.00%</span>
<span class="t" style="top:530.00px;font-size:15.2px;color:#000;left:686.36px;transform:scaleX(1.0293);">87.1%</span>
<span class="t" style="top:554.00px;font-size:15.2px;color:#000;left:59.50px;transform:scaleX(0.9658);">PROD LINE 2</span>
<span class="t" style="top:554.00px;font-size:15.2px;color:#000;left:195.48px;transform:scaleX(1.0396);">8,814</span>
<span class="t" style="top:554.00px;font-size:15.2px;color:#000;left:307.45px;transform:scaleX(1.0451);">12,651</span>
<span class="t" style="top:554.00px;font-size:15.2px;color:#000;left:447.23px;transform:scaleX(1.0387);">-30.33%</span>
<span class="t" style="top:554.00px;font-size:15.2px;color:#000;left:557.93px;transform:scaleX(1.0360);">88.24%</span>
<span class="t" style="top:554.00px;font-size:15.2px;color:#000;left:686.36px;transform:scaleX(1.0293);">88.0%</span>
<span class="t" style="top:578.00px;font-size:15.3px;color:#000;font-weight:700;left:59.50px;transform:scaleX(1.0236);">Grand Total</span>
<span class="t" style="top:578.00px;font-size:15.3px;color:#000;font-weight:700;left:185.35px;transform:scaleX(1.0546);">19,820</span>
<span class="t" style="top:578.00px;font-size:15.3px;color:#000;font-weight:700;left:306.35px;transform:scaleX(1.0546);">23,889</span>
<span class="t" style="top:578.00px;font-size:15.3px;color:#000;font-weight:700;left:446.42px;transform:scaleX(1.0526);">-17.03%</span>
<span class="t" style="top:578.00px;font-size:15.3px;color:#000;font-weight:700;left:557.32px;transform:scaleX(1.0480);">87.62%</span>
<span class="t" style="top:578.00px;font-size:15.3px;color:#000;font-weight:700;left:685.89px;transform:scaleX(1.0423);">87.5%</span>
</section>
<section class="grp selection" aria-label="selection">
<div style="left:164px;top:379px;width:76px;height:27px;border:2px solid #107c41;box-shadow:inset 0 0 0 1px #fff;"></div>
<div style="left:235px;top:401px;width:7px;height:7px;background:#107c41;border:1px solid #fff;"></div>
</section>
<figure class="grp chart" aria-label="chart">
<div style="left:60px;top:615px;width:875px;height:403px;background:#fff;border:1px solid #d9d9d9;"></div>
<div style="left:73px;top:625.2px;width:39.7px;height:20.5px;background:linear-gradient(#e4e4e4,#d6d6d6 50%,#c2c2c2);"></div>
<span class="t" style="top:630.00px;font-size:12px;color:#111;left:77.30px;transform:scaleX(0.9605);">Good</span>
<div style="left:114px;top:625.2px;width:41.8px;height:20.5px;background:linear-gradient(#e4e4e4,#d6d6d6 50%,#c2c2c2);"></div>
<span class="t" style="top:630.00px;font-size:12px;color:#111;left:118.30px;transform:scaleX(0.9248);">Scrap</span>
<div style="left:124px;top:948px;width:723px;height:1px;background:#d9d9d9;"></div>
<span class="t" style="top:943.00px;font-size:12.6px;color:#595959;left:103.30px;transform:scaleX(0.9835);">0</span>
<div style="left:124px;top:901px;width:723px;height:1px;background:#d9d9d9;"></div>
<span class="t" style="top:896.00px;font-size:12.6px;color:#595959;left:76.40px;transform:scaleX(1.0725);">2,000</span>
<div style="left:124px;top:853px;width:723px;height:1px;background:#d9d9d9;"></div>
<span class="t" style="top:848.00px;font-size:12.6px;color:#595959;left:76.40px;transform:scaleX(1.0725);">4,000</span>
<div style="left:124px;top:806px;width:723px;height:1px;background:#d9d9d9;"></div>
<span class="t" style="top:801.00px;font-size:12.6px;color:#595959;left:76.40px;transform:scaleX(1.0725);">6,000</span>
<div style="left:124px;top:759px;width:723px;height:1px;background:#d9d9d9;"></div>
<span class="t" style="top:754.00px;font-size:12.6px;color:#595959;left:76.40px;transform:scaleX(1.0725);">8,000</span>
<div style="left:124px;top:711px;width:723px;height:1px;background:#d9d9d9;"></div>
<span class="t" style="top:706.00px;font-size:12.6px;color:#595959;left:69.80px;transform:scaleX(1.0485);">10,000</span>
<div style="left:124px;top:664px;width:723px;height:1px;background:#d9d9d9;"></div>
<span class="t" style="top:659.00px;font-size:12.6px;color:#595959;left:69.80px;transform:scaleX(1.0485);">12,000</span>
<svg style="left:0;top:0" width="1406" height="1161" shape-rendering="crispEdges"><rect x="130" y="708" width="6" height="240" fill="#4472c4"/><rect x="136" y="943" width="5" height="5" fill="#ed7d31"/><rect x="153" y="735" width="6" height="213" fill="#4472c4"/><rect x="159" y="927" width="6" height="21" fill="#ed7d31"/><rect x="177" y="706" width="5" height="242" fill="#4472c4"/><rect x="182" y="938" width="6" height="10" fill="#ed7d31"/><rect x="200" y="694" width="6" height="254" fill="#4472c4"/><rect x="206" y="947" width="5" height="1" fill="#ed7d31"/><rect x="223" y="743" width="6" height="205" fill="#4472c4"/><rect x="229" y="912" width="6" height="36" fill="#ed7d31"/><rect x="247" y="729" width="5" height="219" fill="#4472c4"/><rect x="252" y="923" width="6" height="25" fill="#ed7d31"/><rect x="270" y="707" width="6" height="241" fill="#4472c4"/><rect x="276" y="941" width="5" height="7" fill="#ed7d31"/><rect x="293" y="716" width="6" height="232" fill="#4472c4"/><rect x="299" y="947" width="6" height="1" fill="#ed7d31"/><rect x="317" y="699" width="5" height="249" fill="#4472c4"/><rect x="322" y="941" width="6" height="7" fill="#ed7d31"/><rect x="340" y="741" width="6" height="207" fill="#4472c4"/><rect x="346" y="911" width="5" height="37" fill="#ed7d31"/><rect x="363" y="701" width="6" height="247" fill="#4472c4"/><rect x="369" y="938" width="6" height="10" fill="#ed7d31"/><rect x="387" y="724" width="5" height="224" fill="#4472c4"/><rect x="392" y="933" width="6" height="15" fill="#ed7d31"/><rect x="410" y="723" width="6" height="225" fill="#4472c4"/><rect x="416" y="929" width="5" height="19" fill="#ed7d31"/><rect x="433" y="691" width="6" height="257" fill="#4472c4"/><rect x="439" y="940" width="6" height="8" fill="#ed7d31"/><rect x="457" y="714" width="5" height="234" fill="#4472c4"/><rect x="462" y="930" width="6" height="18" fill="#ed7d31"/><rect x="480" y="733" width="6" height="215" fill="#4472c4"/><rect x="486" y="942" width="5" height="6" fill="#ed7d31"/><rect x="503" y="727" width="6" height="221" fill="#4472c4"/><rect x="509" y="933" width="6" height="15" fill="#ed7d31"/><rect x="527" y="699" width="5" height="249" fill="#4472c4"/><rect x="532" y="934" width="6" height="14" fill="#ed7d31"/><rect x="550" y="717" width="6" height="231" fill="#4472c4"/><rect x="556" y="939" width="5" height="9" fill="#ed7d31"/><rect x="573" y="707" width="6" height="241" fill="#4472c4"/><rect x="579" y="934" width="6" height="14" fill="#ed7d31"/><rect x="597" y="703" width="5" height="245" fill="#4472c4"/><rect x="602" y="943" width="6" height="5" fill="#ed7d31"/><rect x="620" y="725" width="6" height="223" fill="#4472c4"/><rect x="626" y="924" width="5" height="24" fill="#ed7d31"/><rect x="643" y="752" width="6" height="196" fill="#4472c4"/><rect x="649" y="916" width="6" height="32" fill="#ed7d31"/><rect x="667" y="726" width="5" height="222" fill="#4472c4"/><rect x="672" y="933" width="6" height="15" fill="#ed7d31"/><rect x="690" y="678" width="6" height="270" fill="#4472c4"/><rect x="696" y="944" width="5" height="4" fill="#ed7d31"/><rect x="713" y="699" width="6" height="249" fill="#4472c4"/><rect x="719" y="942" width="6" height="6" fill="#ed7d31"/><rect x="737" y="699" width="5" height="249" fill="#4472c4"/><rect x="742" y="932" width="6" height="16" fill="#ed7d31"/><rect x="760" y="698" width="6" height="250" fill="#4472c4"/><rect x="766" y="935" width="5" height="13" fill="#ed7d31"/><rect x="783" y="745" width="6" height="203" fill="#4472c4"/><rect x="789" y="911" width="6" height="37" fill="#ed7d31"/><rect x="807" y="727" width="5" height="221" fill="#4472c4"/><rect x="812" y="934" width="6" height="14" fill="#ed7d31"/><rect x="830" y="695" width="6" height="253" fill="#4472c4"/><rect x="836" y="934" width="5" height="14" fill="#ed7d31"/></svg>
<span class="t" style="top:962.00px;font-size:12.6px;color:#595959;left:131.75px;transform:scaleX(1.0548);">1</span>
<span class="t" style="top:962.00px;font-size:12.6px;color:#595959;left:155.06px;transform:scaleX(1.0548);">2</span>
<span class="t" style="top:962.00px;font-size:12.6px;color:#595959;left:178.37px;transform:scaleX(1.0548);">3</span>
<span class="t" style="top:962.00px;font-size:12.6px;color:#595959;left:201.68px;transform:scaleX(1.0548);">4</span>
<span class="t" style="top:962.00px;font-size:12.6px;color:#595959;left:224.99px;transform:scaleX(1.0548);">5</span>
<span class="t" style="top:962.00px;font-size:12.6px;color:#595959;left:248.30px;transform:scaleX(1.0548);">6</span>
<span class="t" style="top:962.00px;font-size:12.6px;color:#595959;left:271.61px;transform:scaleX(1.0548);">7</span>
<span class="t" style="top:962.00px;font-size:12.6px;color:#595959;left:294.92px;transform:scaleX(1.0548);">8</span>
<span class="t" style="top:962.00px;font-size:12.6px;color:#595959;left:318.23px;transform:scaleX(1.0548);">9</span>
<span class="t" style="top:962.00px;font-size:12.6px;color:#595959;left:337.94px;transform:scaleX(1.0417);">10</span>
<span class="t" style="top:962.00px;font-size:12.6px;color:#595959;left:361.25px;transform:scaleX(1.1164);">11</span>
<span class="t" style="top:962.00px;font-size:12.6px;color:#595959;left:384.56px;transform:scaleX(1.0417);">12</span>
<span class="t" style="top:962.00px;font-size:12.6px;color:#595959;left:407.87px;transform:scaleX(1.0417);">13</span>
<span class="t" style="top:962.00px;font-size:12.6px;color:#595959;left:431.18px;transform:scaleX(1.0417);">14</span>
<span class="t" style="top:962.00px;font-size:12.6px;color:#595959;left:454.49px;transform:scaleX(1.0417);">15</span>
<span class="t" style="top:962.00px;font-size:12.6px;color:#595959;left:477.80px;transform:scaleX(1.0417);">16</span>
<span class="t" style="top:962.00px;font-size:12.6px;color:#595959;left:501.11px;transform:scaleX(1.0417);">17</span>
<span class="t" style="top:962.00px;font-size:12.6px;color:#595959;left:524.42px;transform:scaleX(1.0417);">18</span>
<span class="t" style="top:962.00px;font-size:12.6px;color:#595959;left:547.73px;transform:scaleX(1.0417);">19</span>
<span class="t" style="top:962.00px;font-size:12.6px;color:#595959;left:571.04px;transform:scaleX(1.0417);">20</span>
<span class="t" style="top:962.00px;font-size:12.6px;color:#595959;left:594.35px;transform:scaleX(1.0417);">21</span>
<span class="t" style="top:962.00px;font-size:12.6px;color:#595959;left:617.66px;transform:scaleX(1.0417);">22</span>
<span class="t" style="top:962.00px;font-size:12.6px;color:#595959;left:640.97px;transform:scaleX(1.0417);">23</span>
<span class="t" style="top:962.00px;font-size:12.6px;color:#595959;left:664.28px;transform:scaleX(1.0417);">24</span>
<span class="t" style="top:962.00px;font-size:12.6px;color:#595959;left:687.59px;transform:scaleX(1.0417);">25</span>
<span class="t" style="top:962.00px;font-size:12.6px;color:#595959;left:710.90px;transform:scaleX(1.0417);">26</span>
<span class="t" style="top:962.00px;font-size:12.6px;color:#595959;left:734.21px;transform:scaleX(1.0417);">27</span>
<span class="t" style="top:962.00px;font-size:12.6px;color:#595959;left:757.52px;transform:scaleX(1.0417);">28</span>
<span class="t" style="top:962.00px;font-size:12.6px;color:#595959;left:780.83px;transform:scaleX(1.0417);">29</span>
<span class="t" style="top:962.00px;font-size:12.6px;color:#595959;left:804.14px;transform:scaleX(1.0417);">30</span>
<span class="t" style="top:962.00px;font-size:12.6px;color:#595959;left:827.45px;transform:scaleX(1.0417);">31</span>
<div style="left:73px;top:986.3px;width:94.8px;height:20.4px;background:linear-gradient(#e4e4e4,#d6d6d6 50%,#c2c2c2);"></div>
<span class="t" style="top:991.00px;font-size:12px;color:#111;left:77.30px;transform:scaleX(0.9870);">DayNumber</span>
<svg style="left:154px;top:994.8px;" width="6.6" height="4" viewBox="0 0 6.6 4"><path d="M0 0 H6.6 L3.3 4 Z" fill="#222"/></svg>
<div style="left:866px;top:779.2px;width:56px;height:20.6px;background:linear-gradient(#e4e4e4,#d6d6d6 50%,#c2c2c2);"></div>
<span class="t" style="top:784.00px;font-size:12px;color:#111;left:870.30px;transform:scaleX(0.9745);">Values</span>
<div style="left:872.1px;top:810.1px;width:7.7px;height:7.7px;background:#4472c4;"></div>
<span class="t" style="top:809.00px;font-size:12.8px;color:#595959;left:883.70px;transform:scaleX(0.9741);">Good</span>
<div style="left:872.1px;top:837px;width:7.7px;height:7.9px;background:#ed7d31;"></div>
<span class="t" style="top:836.00px;font-size:12.8px;color:#595959;left:883.70px;transform:scaleX(0.9450);">Scrap</span>
</figure>
<section class="grp vscroll" aria-label="vscroll">
<div style="left:0px;top:1130px;width:1108px;height:31px;background:#e5e8f0;"></div>
<div style="left:1085px;top:117px;width:23px;height:1013px;background:linear-gradient(#e9edf2,#e5e8f0);"></div>
<div style="left:1085px;top:117px;width:1px;height:1013px;background:#dcdcdc;"></div>
<div style="left:1088px;top:117px;width:17px;height:1016px;background:#f3f3f3;border-radius:8.5px;"></div>
<svg style="left:1091.75px;top:122px;" width="9" height="7" viewBox="0 0 9 7"><path d="M4.5 0.3 C4.9 0.3 5.1 0.5 5.4 0.9 L8.6 5.6 C9 6.3 8.7 6.9 7.9 6.9 H1.1 C0.3 6.9 0 6.3 0.4 5.6 L3.6 0.9 C3.9 0.5 4.1 0.3 4.5 0.3 Z" fill="#6e6e6e"/></svg>
<div style="left:1091.7px;top:134px;width:9px;height:956px;background:#707070;border-radius:4.5px;"></div>
<svg style="left:1091.9px;top:1121.2px;" width="9" height="7" viewBox="0 0 9 7"><path d="M4.5 6.7 C4.9 6.7 5.1 6.5 5.4 6.1 L8.6 1.4 C9 0.7 8.7 0.1 7.9 0.1 H1.1 C0.3 0.1 0 0.7 0.4 1.4 L3.6 6.1 C3.9 6.5 4.1 6.7 4.5 6.7 Z" fill="#6e6e6e"/></svg>
<div style="left:1107px;top:117px;width:1px;height:1044px;background:#cbcbcb;"></div>
</section>
<footer class="grp sheetbar" aria-label="sheetbar">
<svg style="left:25.5px;top:1140.8px;" width="7" height="10" viewBox="0 0 7 10"><path d="M6 0.5 L1 5 L6 9.5" fill="none" stroke="#9a9a9a" stroke-width="1.2"/></svg>
<svg style="left:58px;top:1140.8px;" width="7" height="10" viewBox="0 0 7 10"><path d="M1 0.5 L6 5 L1 9.5" fill="none" stroke="#9a9a9a" stroke-width="1.2"/></svg>
<span class="t" style="top:1139.00px;font-size:13.5px;color:#444;left:120.50px;transform:scaleX(0.9463);">Sheet1</span>
<div style="left:174px;top:1137px;width:1px;height:17.5px;background:#c8c8c8;"></div>
<svg style="left:173px;top:1130px;" width="71" height="29" viewBox="0 0 71 29"><path d="M0 0 C4 0 6 2 6 6 V23 C6 26 8 28 11 28 H59.5 C62.5 28 64.5 26 64.5 23 V6 C64.5 2 66.5 0 70.5 0 Z" fill="#fff"/></svg>
<span class="t" style="top:1137.00px;font-size:13.5px;color:#222;font-weight:700;left:187.50px;transform:scaleX(0.9372);">Sheet2</span>
<div style="left:187px;top:1153px;width:42.5px;height:2px;background:#107c41;"></div>
<div style="left:241.7px;top:1137px;width:1px;height:17.5px;background:#c8c8c8;"></div>
<svg style="left:285px;top:1140px;" width="11" height="11" viewBox="0 0 11 11"><path d="M5.5 0 V11 M0 5.5 H11" stroke="#333" stroke-width="1.1"/></svg>
<svg style="left:664.5px;top:1142.6px;" width="3" height="10" viewBox="0 0 3 10"><circle cx="1.5" cy="1.2" r="1.1" fill="#333"/><circle cx="1.5" cy="4.9" r="1.1" fill="#333"/><circle cx="1.5" cy="8.6" r="1.1" fill="#333"/></svg>
<div style="left:682.3px;top:1137px;width:405.7px;height:16.5px;background:#f3f3f3;border-radius:8.25px;"></div>
<svg style="left:686.4px;top:1141px;" width="7.6" height="9" viewBox="0 0 7.6 9"><path d="M0.3 4.5 C0.3 4.1 0.5 3.9 0.9 3.6 L5.9 0.4 C6.6 0 7.2 0.3 7.2 1.1 V7.9 C7.2 8.7 6.6 9 5.9 8.6 L0.9 5.4 C0.5 5.1 0.3 4.9 0.3 4.5 Z" fill="#6e6e6e"/></svg>
<div style="left:698.7px;top:1141.2px;width:265.6px;height:8.8px;background:#707070;border-radius:4.4px;"></div>
<svg style="left:1076px;top:1141px;" width="7.6" height="9" viewBox="0 0 7.6 9"><path d="M7.3 4.5 C7.3 4.1 7.1 3.9 6.7 3.6 L1.7 0.4 C1 0 0.4 0.3 0.4 1.1 V7.9 C0.4 8.7 1 9 1.7 8.6 L6.7 5.4 C7.1 5.1 7.3 4.9 7.3 4.5 Z" fill="#6e6e6e"/></svg>
</footer>
<aside class="grp taskpane" aria-label="taskpane">
<div style="left:1108px;top:117px;width:260px;height:1044px;background:#f0f0f0;"></div>
<div style="left:1368px;top:117px;width:38px;height:1044px;background:#fafafa;"></div>
<span class="t" style="top:133.00px;font-size:20.3px;color:#484848;left:1121.80px;transform:scaleX(0.9797);">PivotTable Fields</span>
<svg style="left:1305px;top:136.5px;" width="13" height="8" viewBox="0 0 13 8"><path d="M0.4 0.5 L6.5 7 L12.6 0.5" fill="none" stroke="#333" stroke-width="1.1"/></svg>
<svg style="left:1339px;top:135px;" width="10.5" height="10.5" viewBox="0 0 10.5 10.5"><path d="M0.4 0.4 L10.1 10.1 M10.1 0.4 L0.4 10.1" stroke="#333" stroke-width="1.1"/></svg>
<span class="t" style="top:173.00px;font-size:12px;color:#1f1f1f;left:1120.90px;transform:scaleX(0.9690);">Show fields:</span>
<div style="left:1194px;top:168.2px;width:104.5px;height:20.6px;background:#fff;border:1px solid #8c8c8c;"></div>
<span class="t" style="top:173.00px;font-size:12px;color:#1f1f1f;left:1201.40px;transform:scaleX(0.9799);">(All)</span>
<svg style="left:1287.5px;top:177px;" width="6" height="3.6" viewBox="0 0 6 3.6"><path d="M0.4 0.4 L3.0 3.2 L5.6 0.4" fill="none" stroke="#222" stroke-width="1.3"/></svg>
<div style="left:1308px;top:164.3px;width:45.7px;height:28.4px;background:#fff;border:1px solid #8c8c8c;"></div>
<svg style="left:1318px;top:170.3px;" width="16.2" height="15.4" viewBox="0 0 16.2 15.4"><path d="M6.6 0.6 H9.6 L10.2 2.7 L11.7 3.5 L13.8 2.9 L15.3 5.4 L13.8 7 V8.6 L15.3 10.2 L13.8 12.7 L11.7 12.1 L10.2 12.9 L9.6 15 H6.6 L6 12.9 L4.5 12.1 L2.4 12.7 L0.9 10.2 L2.4 8.6 V7 L0.9 5.4 L2.4 2.9 L4.5 3.5 L6 2.7 Z" fill="none" stroke="#333" stroke-width="1.05" stroke-linejoin="round"/><circle cx="8.1" cy="7.8" r="2.5" fill="none" stroke="#333" stroke-width="1.05"/></svg>
<svg style="left:1342px;top:177px;" width="5.4" height="3.4" viewBox="0 0 5.4 3.4"><path d="M0.4 0.4 L2.7 3.0 L5.0 0.4" fill="none" stroke="#222" stroke-width="1.3"/></svg>
<div style="left:1120.2px;top:205.9px;width:233.5px;height:23.8px;background:#fff;border:1px solid #8c8c8c;"></div>
<span class="t" style="top:211.00px;font-size:12px;color:#6b6b6b;left:1127.00px;transform:scaleX(0.9150);">Search</span>
<svg style="left:1334.5px;top:210px;" width="16" height="15" viewBox="0 0 16 15"><circle cx="10" cy="5.6" r="4.8" fill="none" stroke="#333" stroke-width="1.1"/><path d="M6.6 9.2 L0.6 14.6" stroke="#333" stroke-width="1.2"/></svg>
<div style="left:1120.2px;top:246.2px;width:233.6px;height:394.2px;background:#fff;border:1px solid #8c8c8c;"></div>
<div style="left:1336px;top:247.2px;width:16.8px;height:392.2px;background:#f0f0f0;"></div>
<svg style="left:1340.2px;top:252.2px;" width="9" height="6.4" viewBox="0 0 9 6.4"><path d="M4.5 0 L9 6.4 H0 Z" fill="#6e6e6e"/></svg>
<svg style="left:1340.2px;top:628.4px;" width="9" height="6.4" viewBox="0 0 9 6.4"><path d="M4.5 6.4 L9 0 H0 Z" fill="#6e6e6e"/></svg>
<div style="left:1340px;top:264px;width:9px;height:62px;background:#6e6e6e;"></div>
<svg style="left:1128.5px;top:253.3px;" width="7" height="6" viewBox="0 0 7 6"><path d="M0 5.4 H6.4 V0" fill="none" stroke="#333" stroke-width="1"/></svg>
<svg style="left:1142px;top:249.2px;" width="12" height="13.8" viewBox="0 0 12 13.8"><path d="M11.5 2.7600000000000002 V0.6 H0.8 L6.24 6.9 L0.8 13.200000000000001 H11.5 V11.040000000000001" fill="none" stroke="#222" stroke-width="1.1" stroke-linejoin="miter"/></svg>
<span class="t" style="top:250.00px;font-size:12px;color:#1f1f1f;left:1159.60px;transform:scaleX(0.9596);">Mesure</span>
<div style="left:1159px;top:267.4px;width:13px;height:13px;background:#fff;border:1px solid #8c8c8c;"></div>
<span class="t" style="top:263.00px;font-size:17px;color:#222;font-family:'Liberation Serif', 'Times New Roman', serif;font-style:italic;left:1180.40px;">f</span>
<span class="t" style="top:265.00px;font-size:14.5px;color:#222;font-family:'Liberation Serif', 'Times New Roman', serif;font-style:italic;left:1185.40px;">x</span>
<span class="t" style="top:267.00px;font-size:12px;color:#1f1f1f;left:1196.50px;transform:scaleX(0.9961);">bettPerfor</span>
<div style="left:1159px;top:291.4px;width:13px;height:13px;background:#fff;border:1px solid #8c8c8c;"></div>
<span class="t" style="top:287.00px;font-size:17px;color:#222;font-family:'Liberation Serif', 'Times New Roman', serif;font-style:italic;left:1180.40px;">f</span>
<span class="t" style="top:289.00px;font-size:14.5px;color:#222;font-family:'Liberation Serif', 'Times New Roman', serif;font-style:italic;left:1185.40px;">x</span>
<span class="t" style="top:291.00px;font-size:12px;color:#1f1f1f;left:1196.50px;transform:scaleX(0.9576);">Lower</span>
<div style="left:1159px;top:315.4px;width:13px;height:13px;background:#fff;border:1px solid #8c8c8c;"></div>
<span class="t" style="top:311.00px;font-size:17px;color:#222;font-family:'Liberation Serif', 'Times New Roman', serif;font-style:italic;left:1180.40px;">f</span>
<span class="t" style="top:313.00px;font-size:14.5px;color:#222;font-family:'Liberation Serif', 'Times New Roman', serif;font-style:italic;left:1185.40px;">x</span>
<span class="t" style="top:315.00px;font-size:12px;color:#1f1f1f;left:1196.50px;transform:scaleX(0.9621);">Lower Good</span>
<div style="left:1159px;top:339.4px;width:13px;height:13px;background:#fff;border:1px solid #8c8c8c;"></div>
<span class="t" style="top:335.00px;font-size:17px;color:#222;font-family:'Liberation Serif', 'Times New Roman', serif;font-style:italic;left:1180.40px;">f</span>
<span class="t" style="top:337.00px;font-size:14.5px;color:#222;font-family:'Liberation Serif', 'Times New Roman', serif;font-style:italic;left:1185.40px;">x</span>
<span class="t" style="top:339.00px;font-size:12px;color:#1f1f1f;left:1196.50px;transform:scaleX(0.9816);">Lower WhatIf</span>
<div style="left:1159px;top:363.4px;width:13px;height:13px;background:#fff;border:1px solid #8c8c8c;"></div>
<span class="t" style="top:359.00px;font-size:17px;color:#222;font-family:'Liberation Serif', 'Times New Roman', serif;font-style:italic;left:1180.40px;">f</span>
<span class="t" style="top:361.00px;font-size:14.5px;color:#222;font-family:'Liberation Serif', 'Times New Roman', serif;font-style:italic;left:1185.40px;">x</span>
<span class="t" style="top:363.00px;font-size:12px;color:#1f1f1f;left:1196.50px;transform:scaleX(0.9621);">Upper Good</span>
<div style="left:1159px;top:387.4px;width:13px;height:13px;background:#fff;border:1px solid #8c8c8c;"></div>
<span class="t" style="top:383.00px;font-size:17px;color:#222;font-family:'Liberation Serif', 'Times New Roman', serif;font-style:italic;left:1180.40px;">f</span>
<span class="t" style="top:385.00px;font-size:14.5px;color:#222;font-family:'Liberation Serif', 'Times New Roman', serif;font-style:italic;left:1185.40px;">x</span>
<span class="t" style="top:387.00px;font-size:12px;color:#1f1f1f;left:1196.50px;transform:scaleX(0.9816);">Upper WhatIf</span>
<svg style="left:1128.5px;top:424.2px;" width="7" height="6" viewBox="0 0 7 6"><path d="M0 5.4 H6.4 V0" fill="none" stroke="#333" stroke-width="1"/></svg>
<svg style="left:1142px;top:420px;" width="12" height="13.8" viewBox="0 0 12 13.8"><path d="M11.5 2.7600000000000002 V0.6 H0.8 L6.24 6.9 L0.8 13.200000000000001 H11.5 V11.040000000000001" fill="none" stroke="#222" stroke-width="1.1" stroke-linejoin="miter"/></svg>
<span class="t" style="top:421.00px;font-size:12px;color:#1f1f1f;left:1159.20px;transform:scaleX(0.9382);">Values</span>
<svg style="left:1147.7px;top:440.3px;" width="4.6" height="7.2" viewBox="0 0 4.6 7.2"><path d="M0.5 0.4 L4 3.6 L0.5 6.8" fill="none" stroke="#333" stroke-width="1"/></svg>
<svg style="left:1158px;top:437.7px;" width="16" height="13" viewBox="0 0 16 13"><path d="M0.6 12.4 V0.8 H6.4 L7.6 2.6 H15.4 V12.4 Z M0.6 2.6 H7.6" fill="#fafafa" stroke="#3b3b3b" stroke-width="1"/></svg>
<span class="t" style="top:438.00px;font-size:12px;color:#1f1f1f;left:1177.70px;transform:scaleX(0.9593);">My Measures</span>
<svg style="left:1147.7px;top:460.3px;" width="4.6" height="7.2" viewBox="0 0 4.6 7.2"><path d="M0.5 0.4 L4 3.6 L0.5 6.8" fill="none" stroke="#333" stroke-width="1"/></svg>
<svg style="left:1158px;top:457.7px;" width="16" height="13" viewBox="0 0 16 13"><path d="M0.6 12.4 V0.8 H6.4 L7.6 2.6 H15.4 V12.4 Z M0.6 2.6 H7.6" fill="#fafafa" stroke="#3b3b3b" stroke-width="1"/></svg>
<span class="t" style="top:458.00px;font-size:12px;color:#1f1f1f;left:1177.70px;transform:scaleX(0.9982);">My Validation Folder</span>
<svg style="left:1128.5px;top:490.6px;" width="7" height="6" viewBox="0 0 7 6"><path d="M0 5.4 H6.4 V0" fill="none" stroke="#333" stroke-width="1"/></svg>
<svg style="left:1140px;top:486px;" width="17" height="16" viewBox="0 0 17 16"><rect x="0.6" y="0.6" width="14.6" height="2.2" fill="#cfcfcf" stroke="#3b3b3b" stroke-width="1"/><path d="M0.6 2.8 V15 H8 M5.4 2.8 V15 M10.4 2.8 V7 M15.2 2.8 V7 M0.6 6.8 H10 M0.6 10.8 H8" fill="none" stroke="#3b3b3b" stroke-width="1"/><path d="M9 8 C9 6.2 15.8 6.2 15.8 8 V14 C15.8 15.8 9 15.8 9 14 Z M9 8 C9 9.6 15.8 9.6 15.8 8" fill="#fff" stroke="#e8731a" stroke-width="1.1"/></svg>
<span class="t" style="top:488.00px;font-size:12.5px;color:#111;font-family:'DejaVu Sans', sans-serif;left:1160.00px;transform:scaleX(0.7131);">★</span>
<span class="t" style="top:488.00px;font-size:12px;color:#1f1f1f;left:1171.40px;transform:scaleX(0.9922);">Alarm</span>
<div style="left:1159px;top:505.4px;width:13px;height:13px;background:#fff;border:1px solid #8c8c8c;"></div>
<span class="t" style="top:505.00px;font-size:12.5px;color:#111;font-family:'DejaVu Sans', sans-serif;left:1178.50px;transform:scaleX(0.7131);">★</span>
<span class="t" style="top:505.00px;font-size:12px;color:#1f1f1f;left:1190.30px;transform:scaleX(0.9528);">DesAlarm</span>
<div style="left:1159px;top:529.4px;width:13px;height:13px;background:#fff;border:1px solid #8c8c8c;"></div>
<span class="t" style="top:529.00px;font-size:12px;color:#1f1f1f;left:1178.40px;transform:scaleX(0.9862);">Description</span>
<div style="left:1159px;top:553.2px;width:13px;height:13px;background:#fff;border:1px solid #8c8c8c;"></div>
<span class="t" style="top:553.00px;font-size:12px;color:#1f1f1f;left:1178.40px;transform:scaleX(0.9941);">IdAlarm</span>
<svg style="left:1128.5px;top:589.6px;" width="7" height="6" viewBox="0 0 7 6"><path d="M0 5.4 H6.4 V0" fill="none" stroke="#333" stroke-width="1"/></svg>
<svg style="left:1140px;top:585px;" width="17" height="16" viewBox="0 0 17 16"><rect x="0.6" y="0.6" width="14.6" height="2.2" fill="#cfcfcf" stroke="#3b3b3b" stroke-width="1"/><path d="M0.6 2.8 V15 H8 M5.4 2.8 V15 M10.4 2.8 V7 M15.2 2.8 V7 M0.6 6.8 H10 M0.6 10.8 H8" fill="none" stroke="#3b3b3b" stroke-width="1"/><path d="M9 8 C9 6.2 15.8 6.2 15.8 8 V14 C15.8 15.8 9 15.8 9 14 Z M9 8 C9 9.6 15.8 9.6 15.8 8" fill="#fff" stroke="#e8731a" stroke-width="1.1"/></svg>
<span class="t" style="top:587.00px;font-size:12.5px;color:#111;font-family:'DejaVu Sans', sans-serif;left:1160.00px;transform:scaleX(0.7487);">★</span>
<span class="t" style="top:587.00px;font-size:12px;color:#111;font-weight:700;left:1172.50px;transform:scaleX(0.9485);">Dim_ProductionLine</span>
<div style="left:1159px;top:604.4px;width:13px;height:13px;background:#107c41;"><svg style="left:0;top:0" width="13" height="13"><path d="M3 6.6 L5.4 9 L10 4.2" fill="none" stroke="#fff" stroke-width="1.3"/></svg></div>
<span class="t" style="top:604.00px;font-size:12.5px;color:#111;font-family:'DejaVu Sans', sans-serif;left:1178.50px;transform:scaleX(0.7666);">★</span>
<span class="t" style="top:604.00px;font-size:12px;color:#111;font-weight:700;left:1191.40px;transform:scaleX(0.9120);">Line</span>
<div style="left:1159px;top:628.4px;width:60px;height:11px;overflow:hidden;"><div style="left:0;top:0;width:13px;height:13px;background:#fff;border:1px solid #8c8c8c"></div><span class="t" style="left:19.4px;top:-1.2px;font-size:12px;color:#1f1f1f;transform:scaleX(0.93)">LineId</span></div>
<div style="left:1122px;top:657px;width:235.5px;height:1px;background:repeating-linear-gradient(90deg,#bdbdbd 0 1px,transparent 1px 3px);"></div>
<span class="t" style="top:664.00px;font-size:12px;color:#1f1f1f;left:1124.40px;transform:scaleX(0.9654);">Drag fields between areas below:</span>
<svg style="left:1127px;top:696px;" width="11" height="11" viewBox="0 0 11 11"><path d="M0 0 H11 L6.8 5 V11 H4.2 V5 Z" fill="#9a9a9a"/></svg>
<span class="t" style="top:697.00px;font-size:12px;color:#1f1f1f;left:1146.20px;transform:scaleX(0.9427);">Filters</span>
<svg style="left:1246px;top:696.8px;" width="9.5" height="10.2" viewBox="0 0 9.5 10.2"><path d="M1 0 V10.2 M3.6 0 V10.2 M6.2 0 V10.2 M8.8 0 V10.2" stroke="#8c8c8c" stroke-width="1.3"/></svg>
<span class="t" style="top:697.00px;font-size:12px;color:#1f1f1f;left:1264.60px;transform:scaleX(1.0009);">Columns</span>
<div style="left:1123px;top:714px;width:109px;height:179.8px;background:#fff;"></div>
<div style="left:1241px;top:714px;width:114px;height:179.8px;background:#fff;"></div>
<div style="left:1238px;top:694px;width:1px;height:206px;background:#a0a0a0;"></div>
<div style="left:1123px;top:900px;width:232px;height:1px;background:#a0a0a0;"></div>
<div style="left:1238px;top:901px;width:1px;height:206.5px;background:#a0a0a0;"></div>
<div style="left:1242.4px;top:716.4px;width:111.4px;height:18.6px;background:#fff;border:1px solid #8c8c8c;"></div>
<svg style="left:1251px;top:720.4px;" width="9" height="11" viewBox="0 0 9 11"><path d="M8.5 2.2 V0.6 H0.8 L4.68 5.5 L0.8 10.4 H8.5 V8.8" fill="none" stroke="#222" stroke-width="1" stroke-linejoin="miter"/></svg>
<span class="t" style="top:720.00px;font-size:12px;color:#1f1f1f;left:1267.40px;transform:scaleX(0.9326);">Values</span>
<svg style="left:1340.4px;top:725px;" width="5.8" height="3.2" viewBox="0 0 5.8 3.2"><path d="M0.4 0.4 L2.9 2.8000000000000003 L5.3999999999999995 0.4" fill="none" stroke="#222" stroke-width="1.2"/></svg>
<svg style="left:1128px;top:910px;" width="10" height="9" viewBox="0 0 10 9"><path d="M0 0.6 H10 M0 3.2 H10 M0 5.8 H10 M0 8.4 H10" stroke="#9a9a9a" stroke-width="1.1"/></svg>
<span class="t" style="top:910.00px;font-size:12px;color:#1f1f1f;left:1146.00px;transform:scaleX(0.9328);">Rows</span>
<svg style="left:1246.6px;top:910.4px;" width="9.4" height="10" viewBox="0 0 9.4 10"><path d="M8.9 2.0 V0.6 H0.8 L4.888000000000001 5.0 L0.8 9.4 H8.9 V8.0" fill="none" stroke="#7a7a7a" stroke-width="1.1" stroke-linejoin="miter"/></svg>
<span class="t" style="top:910.00px;font-size:12px;color:#1f1f1f;left:1263.90px;transform:scaleX(0.9466);">Values</span>
<div style="left:1123px;top:927px;width:109px;height:180.5px;background:#fff;"></div>
<div style="left:1241px;top:927px;width:114px;height:180.5px;background:#fff;"></div>
<div style="left:1124.2px;top:929px;width:106.6px;height:18.6px;background:#fff;border:1px solid #8c8c8c;"></div>
<span class="t" style="top:933.00px;font-size:12.5px;color:#111;font-family:'DejaVu Sans', sans-serif;left:1131.70px;transform:scaleX(0.6596);">★</span>
<span class="t" style="top:933.00px;font-size:12px;color:#1f1f1f;left:1143.10px;transform:scaleX(0.9609);">Line</span>
<svg style="left:1217.4px;top:937.6px;" width="5.8" height="3.2" viewBox="0 0 5.8 3.2"><path d="M0.4 0.4 L2.9 2.8000000000000003 L5.3999999999999995 0.4" fill="none" stroke="#222" stroke-width="1.2"/></svg>
<div style="left:1242.4px;top:929px;width:111.4px;height:18.6px;background:#fff;border:1px solid #8c8c8c;"></div>
<span class="t" style="top:933.00px;font-size:12px;color:#1f1f1f;left:1249.60px;transform:scaleX(0.9571);">Good</span>
<svg style="left:1340.4px;top:937.6px;" width="5.8" height="3.2" viewBox="0 0 5.8 3.2"><path d="M0.4 0.4 L2.9 2.8000000000000003 L5.3999999999999995 0.4" fill="none" stroke="#222" stroke-width="1.2"/></svg>
<div style="left:1242.4px;top:950.1px;width:111.4px;height:18.6px;background:#fff;border:1px solid #8c8c8c;"></div>
<span class="t" style="top:954.00px;font-size:12px;color:#1f1f1f;left:1249.60px;transform:scaleX(0.9709);">PY Good Count</span>
<svg style="left:1340.4px;top:958.7px;" width="5.8" height="3.2" viewBox="0 0 5.8 3.2"><path d="M0.4 0.4 L2.9 2.8000000000000003 L5.3999999999999995 0.4" fill="none" stroke="#222" stroke-width="1.2"/></svg>
<div style="left:1242.4px;top:971.2px;width:111.4px;height:18.6px;background:#fff;border:1px solid #8c8c8c;"></div>
<span class="t" style="top:975.00px;font-size:12px;color:#1f1f1f;left:1249.60px;transform:scaleX(0.9331);">%Δ PY Good C...</span>
<svg style="left:1340.4px;top:979.8px;" width="5.8" height="3.2" viewBox="0 0 5.8 3.2"><path d="M0.4 0.4 L2.9 2.8000000000000003 L5.3999999999999995 0.4" fill="none" stroke="#222" stroke-width="1.2"/></svg>
<div style="left:1242.4px;top:992.3px;width:111.4px;height:18.6px;background:#fff;border:1px solid #8c8c8c;"></div>
<span class="t" style="top:996.00px;font-size:12px;color:#1f1f1f;left:1249.60px;transform:scaleX(1.0066);">Availability%</span>
<svg style="left:1340.4px;top:1000.9px;" width="5.8" height="3.2" viewBox="0 0 5.8 3.2"><path d="M0.4 0.4 L2.9 2.8000000000000003 L5.3999999999999995 0.4" fill="none" stroke="#222" stroke-width="1.2"/></svg>
<div style="left:1242.4px;top:1013.4px;width:111.4px;height:18.6px;background:#fff;border:1px solid #8c8c8c;"></div>
<span class="t" style="top:1017.00px;font-size:12px;color:#1f1f1f;left:1249.60px;transform:scaleX(0.9764);">Performance%</span>
<svg style="left:1340.4px;top:1022px;" width="5.8" height="3.2" viewBox="0 0 5.8 3.2"><path d="M0.4 0.4 L2.9 2.8000000000000003 L5.3999999999999995 0.4" fill="none" stroke="#222" stroke-width="1.2"/></svg>
<div style="left:1126.2px;top:1133.4px;width:12.8px;height:12.6px;background:#fff;border:1px solid #6e6e6e;border-radius:2.5px;"></div>
<span class="t" style="top:1134.00px;font-size:12px;color:#1f1f1f;left:1146.50px;transform:scaleX(0.9707);">Defer Layout Update</span>
<div style="left:1305.3px;top:1127.4px;width:49.4px;height:24.2px;background:#f0f0f0;border:1px solid #d2d2d2;"></div>
<span class="t" style="top:1134.00px;font-size:12px;color:#a6a6a6;left:1311.60px;transform:scaleX(0.9637);">Update</span>
<div style="left:1368px;top:117px;width:44px;height:40px;background:#e5e5e5;border:1px solid #6a6a6a;border-radius:5px;"></div>
<svg style="left:1381.5px;top:129.5px;" width="12.5" height="15.4" viewBox="0 0 12.5 15.4"><rect x="0.6" y="0.6" width="11.3" height="14.2" fill="#fff" stroke="#555" stroke-width="1.1"/><path d="M2.6 3 H9.8 M2.6 5.2 H9.8 M2.6 7.4 H9.8" stroke="#777" stroke-width="1"/><path d="M0.6 9.6 H11.9 M0.6 12.2 H11.9 M6.2 9.6 V14.8" stroke="#555" stroke-width="1.1"/></svg>
<svg style="left:1381px;top:169px;" width="14" height="16" viewBox="0 0 14 16"><path d="M0.6 15.4 V9.8 H4.6 V15.4 Z M4.6 15.4 V5 H8.6 V15.4 Z M8.6 15.4 V0.6 H13 V15.4 Z" fill="none" stroke="#c8862e" stroke-width="1.1" stroke-linejoin="round"/></svg>
<svg style="left:1380px;top:209.6px;" width="16" height="14.6" viewBox="0 0 16 14.6"><rect x="0.6" y="0.6" width="14.8" height="13.4" fill="#fff" stroke="#444" stroke-width="1.1"/><path d="M0.6 3.4 H15.4" stroke="#444" stroke-width="1.4"/><rect x="9.4" y="4.6" width="5.4" height="8.8" fill="#2b88d8"/><path d="M11 6.4 H13.6 M11 8.6 H13.6 M11 10.8 H13.6" stroke="#fff" stroke-width="0.8"/></svg>
<svg style="left:1378.5px;top:248.5px;" width="17" height="17" viewBox="0 0 17 17"><circle cx="8.5" cy="8.5" r="7.8" fill="none" stroke="#2b88d8" stroke-width="1.1"/><path d="M6 6.6 C6 3.6 11 3.6 11 6.6 C11 8.6 8.5 8.6 8.5 10.6" fill="none" stroke="#2b88d8" stroke-width="1.2"/><circle cx="8.5" cy="12.8" r="0.9" fill="#2b88d8"/></svg>
</aside>
</body>
</html>
